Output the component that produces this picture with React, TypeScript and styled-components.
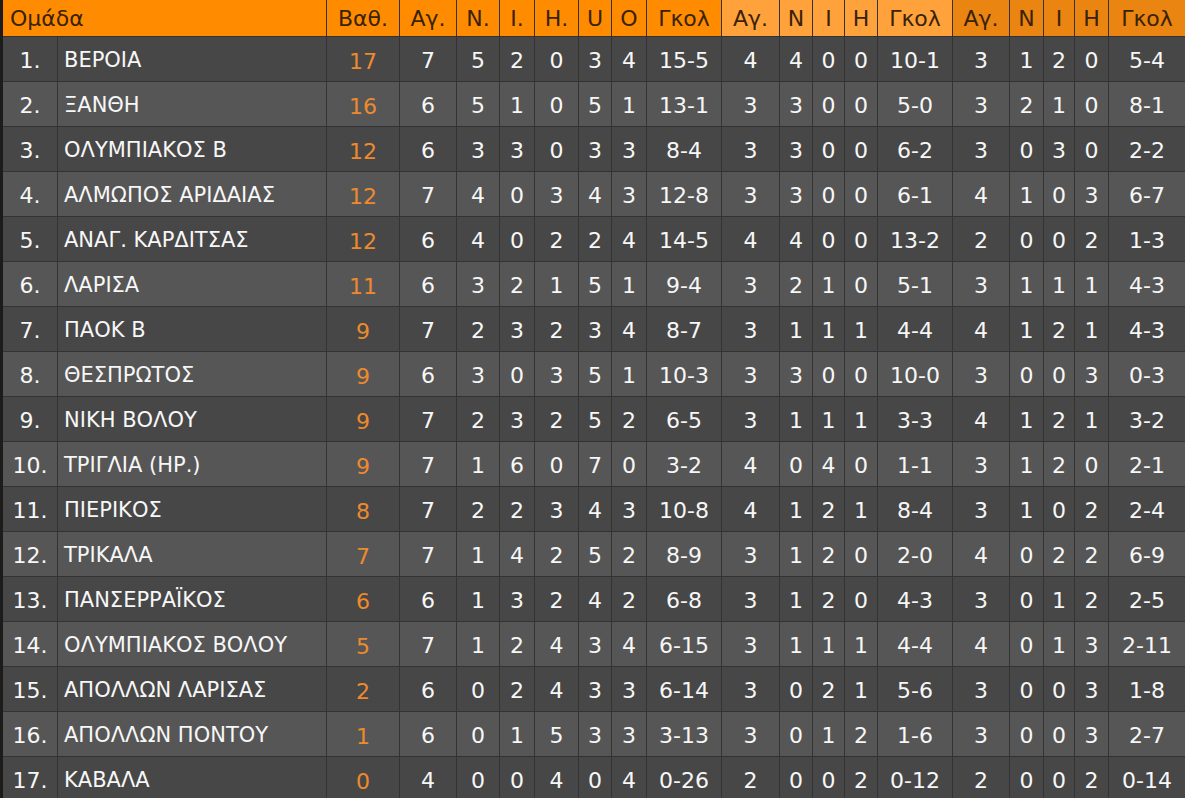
import React from 'react'
import styled, { createGlobalStyle, css } from 'styled-components'

const GlobalStyle = createGlobalStyle`
  html, body {
    margin: 0;
    padding: 0;
    background: #1c1c1c;
  }
  body {
    font-family: "DejaVu Sans", Verdana, sans-serif;
  }
`

const columns = '54px 268px 72px 56px 42px 34px 43px 32px 34px 74px 57px 32px 31px 32px 74px 56px 33px 30px 33px 76px'

const Page = styled.div`
  padding-left: 3px;
  width: 1182px;
  height: 798px;
  overflow: hidden;
`

const Row = styled.div<{ $head?: boolean }>`
  display: grid;
  grid-template-columns: ${columns};
  grid-auto-rows: ${props => (props.$head ? '36px' : '44px')};
  column-gap: 1px;
  padding-bottom: 1px;
  background: #333333;
  font-size: 22px;
`

type Group = 'total' | 'home' | 'away'

const groupColors: Record<Group, string> = {
  total: '#ff8c00',
  home: '#ffa23c',
  away: '#e98510',
}

const HeadCell = styled.div<{ $group: Group; $left?: boolean }>`
  display: flex;
  align-items: center;
  justify-content: ${props => (props.$left ? 'flex-start' : 'center')};
  padding-left: ${props => (props.$left ? '7px' : '0')};
  background: ${props => groupColors[props.$group]};
  color: #3a2208;
  white-space: nowrap;
  ${props =>
    props.$left &&
    css`
      grid-column: span 2;
    `}
`

const Cell = styled.div<{ $even: boolean }>`
  display: flex;
  align-items: center;
  justify-content: center;
  padding-top: 2px;
  background: ${props => (props.$even ? '#565656' : '#474747')};
  color: #f7f7f7;
  white-space: nowrap;
`

const NameCell = styled(Cell)`
  justify-content: flex-start;
  padding-left: 6px;
  font-size: 21px;
`

const PointsCell = styled(Cell)`
  color: #ee8a2e;
  padding-top: 4px;
`

type Team = [string, number, string]

// name, points, then the 17 stats (total / home / away)
const teams: Team[] = [
  ['ΒΕΡΟΙΑ', 17, '7 5 2 0 3 4 15-5 4 4 0 0 10-1 3 1 2 0 5-4'],
  ['ΞΑΝΘΗ', 16, '6 5 1 0 5 1 13-1 3 3 0 0 5-0 3 2 1 0 8-1'],
  ['ΟΛΥΜΠΙΑΚΟΣ Β', 12, '6 3 3 0 3 3 8-4 3 3 0 0 6-2 3 0 3 0 2-2'],
  ['ΑΛΜΩΠΟΣ ΑΡΙΔΑΙΑΣ', 12, '7 4 0 3 4 3 12-8 3 3 0 0 6-1 4 1 0 3 6-7'],
  ['ΑΝΑΓ. ΚΑΡΔΙΤΣΑΣ', 12, '6 4 0 2 2 4 14-5 4 4 0 0 13-2 2 0 0 2 1-3'],
  ['ΛΑΡΙΣΑ', 11, '6 3 2 1 5 1 9-4 3 2 1 0 5-1 3 1 1 1 4-3'],
  ['ΠΑΟΚ Β', 9, '7 2 3 2 3 4 8-7 3 1 1 1 4-4 4 1 2 1 4-3'],
  ['ΘΕΣΠΡΩΤΟΣ', 9, '6 3 0 3 5 1 10-3 3 3 0 0 10-0 3 0 0 3 0-3'],
  ['ΝΙΚΗ ΒΟΛΟΥ', 9, '7 2 3 2 5 2 6-5 3 1 1 1 3-3 4 1 2 1 3-2'],
  ['ΤΡΙΓΛΙΑ (ΗΡ.)', 9, '7 1 6 0 7 0 3-2 4 0 4 0 1-1 3 1 2 0 2-1'],
  ['ΠΙΕΡΙΚΟΣ', 8, '7 2 2 3 4 3 10-8 4 1 2 1 8-4 3 1 0 2 2-4'],
  ['ΤΡΙΚΑΛΑ', 7, '7 1 4 2 5 2 8-9 3 1 2 0 2-0 4 0 2 2 6-9'],
  ['ΠΑΝΣΕΡΡΑΪΚΟΣ', 6, '6 1 3 2 4 2 6-8 3 1 2 0 4-3 3 0 1 2 2-5'],
  ['ΟΛΥΜΠΙΑΚΟΣ ΒΟΛΟΥ', 5, '7 1 2 4 3 4 6-15 3 1 1 1 4-4 4 0 1 3 2-11'],
  ['ΑΠΟΛΛΩΝ ΛΑΡΙΣΑΣ', 2, '6 0 2 4 3 3 6-14 3 0 2 1 5-6 3 0 0 3 1-8'],
  ['ΑΠΟΛΛΩΝ ΠΟΝΤΟΥ', 1, '6 0 1 5 3 3 3-13 3 0 1 2 1-6 3 0 0 3 2-7'],
  ['ΚΑΒΑΛΑ', 0, '4 0 0 4 0 4 0-26 2 0 0 2 0-12 2 0 0 2 0-14'],
]

const headers: [string, Group][] = [
  ['Βαθ.', 'total'],
  ['Αγ.', 'total'],
  ['Ν.', 'total'],
  ['Ι.', 'total'],
  ['Η.', 'total'],
  ['U', 'total'],
  ['O', 'total'],
  ['Γκολ', 'total'],
  ['Αγ.', 'home'],
  ['Ν', 'home'],
  ['Ι', 'home'],
  ['Η', 'home'],
  ['Γκολ', 'home'],
  ['Αγ.', 'away'],
  ['Ν', 'away'],
  ['Ι', 'away'],
  ['Η', 'away'],
  ['Γκολ', 'away'],
]

const App: React.FC = () => (
  <Page>
    <GlobalStyle />
    <Row $head>
      <HeadCell $group="total" $left>Ομάδα</HeadCell>
      {headers.map(([label, group], i) => (
        <HeadCell key={i} $group={group}>{label}</HeadCell>
      ))}
    </Row>
    {teams.map(([name, points, stats], i) => {
      const even = i % 2 === 1
      return (
        <Row key={name}>
          <Cell $even={even}>{i + 1}.</Cell>
          <NameCell $even={even}>{name}</NameCell>
          <PointsCell $even={even}>{points}</PointsCell>
          {stats.split(' ').map((value, j) => (
            <Cell key={j} $even={even}>{value}</Cell>
          ))}
        </Row>
      )
    })}
  </Page>
)

export default App
